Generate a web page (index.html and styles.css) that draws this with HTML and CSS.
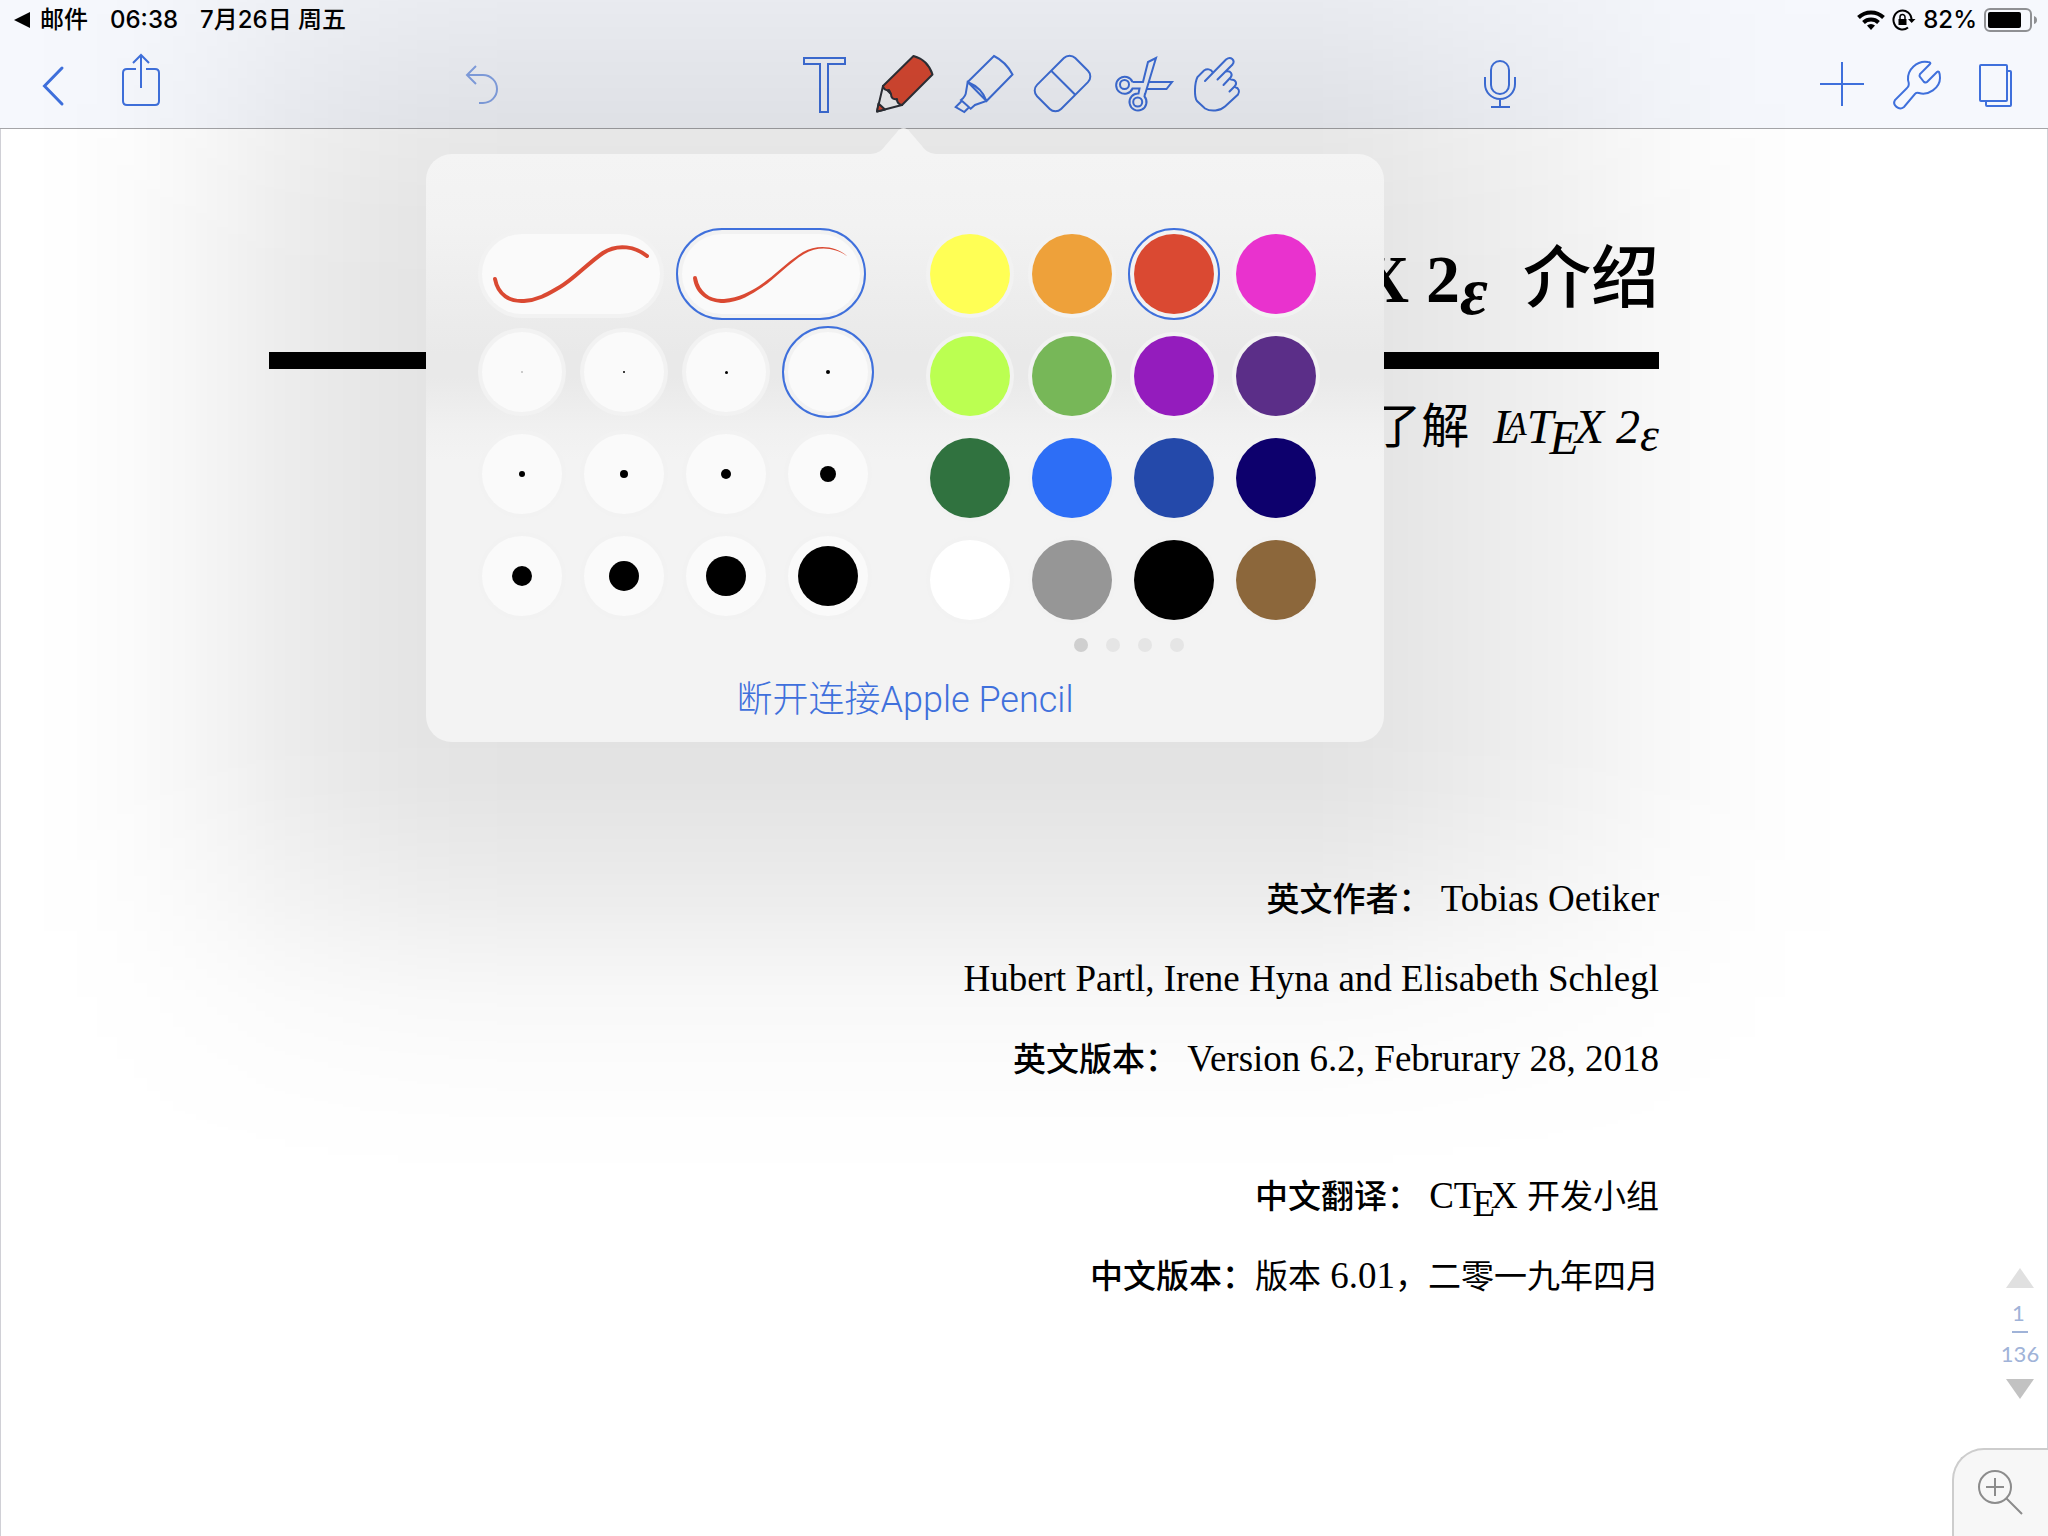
FILE: index.html
```html
<!DOCTYPE html>
<html lang="zh-CN">
<head>
<meta charset="utf-8">
<meta name="viewport" content="width=device-width, initial-scale=1">
<title>LaTeX 2ε 介绍</title>
<link rel="stylesheet" href="styles.css">
</head>
<body>
<header class="header">
  <div class="status">
    <a class="status-back" href="#mail">
      <svg width="16" height="16" viewBox="0 0 16 16" aria-hidden="true"><path d="M0 8 16 0v16z"/></svg>
      <span>邮件</span>
    </a>
    <span>06:38</span>
    <span>7月26日 周五</span>
    <span class="status-right">
      <svg width="28" height="22" viewBox="0 0 28 22" aria-hidden="true"><g fill="none" stroke="#000" stroke-width="4"><path d="M1.500 8.500a18 18 0 0 1 25 0"/><path d="M6.500 13.500a11 11 0 0 1 15 0"/></g><path d="M14 21l-4-4.500a6 6 0 0 1 8 0z"/></svg>
      <svg width="24" height="22" viewBox="0 0 24 22" aria-hidden="true"><g fill="none" stroke="#000" stroke-width="2"><path d="M16 18.500A9 9.500 0 1 1 19.500 11"/><path d="M8 10V8a2.500 2.500 0 0 1 5 0v2" stroke-width="1.500"/></g><path d="M6.500 10h8v6h-8zM16 10h7.500l-3.800 4z"/></svg>
      <span>82%</span>
      <svg width="54" height="24" viewBox="0 0 54 24" aria-hidden="true"><rect x="1" y="1" width="46" height="22" rx="5" fill="none" stroke="#8f9093" stroke-width="2"/><rect x="4" y="4" width="33" height="16" rx="2"/><path d="M50 8q3 1 3 4t-3 4z" fill="#8f9093"/></svg>
    </span>
  </div>
  <nav class="toolbar" aria-label="工具">
    <div class="tools tools-left">
      <button class="tool" type="button" aria-label="返回"><svg viewBox="0 0 80 88"><path d="M50 28 32.500 46 50 64" stroke-width="3" stroke-linecap="round"/></svg></button>
      <button class="tool" type="button" aria-label="共享"><svg viewBox="0 0 80 88"><path d="M36 29H27q-4 0-4 4v28q0 4 4 4h28q4 0 4-4V33q0-4-4-4h-9M41 48V15M33 23l8-8 8 8"/></svg></button>
      <button class="tool tool-undo" type="button" aria-label="撤销"><svg viewBox="0 0 80 88"><path d="M34 26 25 35l9 9M25 35h16a14 14 0 0 1 0 28h-4"/></svg></button>
    </div>
    <div class="tools">
      <button class="tool" type="button" aria-label="文本"><svg viewBox="0 0 80 88"><path d="M20 18h41v6H44v48h-8V24H20z"/></svg></button>
      <div class="pen">
        <button class="tool" type="button" aria-label="笔" aria-expanded="true"><svg viewBox="0 0 80 88"><g stroke="#2e3138" stroke-linejoin="round"><path d="M19 46 38 65 13 71.500z" fill="#f6f6f8"/><path d="M14.500 63.500 21 69.500l-8 2z" fill="#da4932"/><path d="M49.500 16Q64 20 68.500 34.500L38 65q-5-1-5-6-6 1-6-5l-2-4q-5 1-6-4z" fill="#da4932"/></g></svg></button>
        <section class="popover" aria-label="笔设置">
          <svg class="popover-arrow" width="65" height="27" viewBox="0 0 65 27" aria-hidden="true"><path d="M0 27V26C8 25 11 22 14 18L26 4C29-1 36-1 39 4L51 18C54 22 57 25 65 26V27z"/></svg>
          <div class="panels">
            <div class="brush">
              <div class="styles" role="radiogroup" aria-label="笔触">
                <label class="pill"><input type="radio" name="stroke" aria-label="等宽"><svg viewBox="0 0 178 80" aria-hidden="true"><path d="M13 45C16 61 28 68 42 67 58 66 69 58 78 53 92 45 106 29 121 19 136 9 154 13 165 22" fill="none" stroke="#da4932" stroke-width="4" stroke-linecap="round"/></svg></label>
                <label class="pill"><input type="radio" name="stroke" aria-label="压感" checked><svg viewBox="0 0 178 80" aria-hidden="true"><path d="M11 44a2 2 0 0 1 4 0C18 59 29 66 42 65 57 64 69 57 77 52 91 43 106 27 121 18 136 10 154 12 165.500 22.500 154 14 137 11 122 20 107 29 93 45 79 54 70 60 58 68 42 69 26 69 13 60 11 44z" fill="#da4932"/></svg></label>
              </div>
              <div class="grid" role="radiogroup" aria-label="粗细">
                <input class="size size-faint" type="radio" name="size" aria-label="1" style="--dot:2px">
                <input class="size" type="radio" name="size" aria-label="2" style="--dot:2px">
                <input class="size" type="radio" name="size" aria-label="3" style="--dot:3px">
                <input class="size" type="radio" name="size" aria-label="4" style="--dot:4px" checked>
                <input class="size" type="radio" name="size" aria-label="6" style="--dot:6px">
                <input class="size" type="radio" name="size" aria-label="8" style="--dot:8px">
                <input class="size" type="radio" name="size" aria-label="10" style="--dot:10px">
                <input class="size" type="radio" name="size" aria-label="16" style="--dot:16px">
                <input class="size" type="radio" name="size" aria-label="20" style="--dot:20px">
                <input class="size" type="radio" name="size" aria-label="30" style="--dot:30px">
                <input class="size" type="radio" name="size" aria-label="40" style="--dot:40px">
                <input class="size" type="radio" name="size" aria-label="60" style="--dot:60px">
              </div>
            </div>
            <div class="palette">
              <div class="grid" role="radiogroup" aria-label="颜色">
                <input class="swatch" type="radio" name="color" aria-label="黄" style="--c:#ffff55">
                <input class="swatch" type="radio" name="color" aria-label="橙" style="--c:#eea13a">
                <input class="swatch" type="radio" name="color" aria-label="红" style="--c:#da4932" checked>
                <input class="swatch" type="radio" name="color" aria-label="品红" style="--c:#e932ce">
                <input class="swatch" type="radio" name="color" aria-label="黄绿" style="--c:#bbff51">
                <input class="swatch" type="radio" name="color" aria-label="绿" style="--c:#77b758">
                <input class="swatch" type="radio" name="color" aria-label="紫" style="--c:#941cbd">
                <input class="swatch" type="radio" name="color" aria-label="深紫" style="--c:#5b2e88">
                <input class="swatch" type="radio" name="color" aria-label="深绿" style="--c:#30723f">
                <input class="swatch" type="radio" name="color" aria-label="亮蓝" style="--c:#2d6ef6">
                <input class="swatch" type="radio" name="color" aria-label="蓝" style="--c:#2449aa">
                <input class="swatch" type="radio" name="color" aria-label="藏青" style="--c:#0d006d">
                <input class="swatch" type="radio" name="color" aria-label="白" style="--c:#ffffff">
                <input class="swatch" type="radio" name="color" aria-label="灰" style="--c:#969696">
                <input class="swatch" type="radio" name="color" aria-label="黑" style="--c:#000000">
                <input class="swatch" type="radio" name="color" aria-label="棕" style="--c:#8c673b">
              </div>
              <div class="pager" aria-hidden="true"><i class="on"></i><i></i><i></i><i></i></div>
            </div>
          </div>
          <button class="disconnect" type="button">断开连接Apple Pencil</button>
        </section>
      </div>
      <button class="tool" type="button" aria-label="荧光笔"><svg viewBox="0 0 80 88"><path d="M50 16Q62 22 68.500 34.500L42.500 61 23.700 42zM23.700 42Q38 48 42.500 61L31 65l-4.300 3.700L17 60q5-4 5-8zM17.700 61l-6 6 8.600 5 5-5"/></svg></button>
      <button class="tool" type="button" aria-label="橡皮擦"><svg viewBox="0 0 80 88"><g transform="translate(38.500 43.500) rotate(-45)"><rect x="-27" y="-17" width="54" height="34" rx="8"/><path d="M1-17v34"/></g></svg></button>
      <button class="tool" type="button" aria-label="剪刀"><svg viewBox="0 0 80 88"><circle cx="20.500" cy="44.500" r="4.500"/><circle cx="33.700" cy="62" r="4.500"/><path d="M28.500 42H39L44 22l8-4-11 36.500M28.500 42a8.500 8.500 0 1 0 0 6.500H35.500L34.500 53.500a8.500 8.500 0 1 0 6 3l.5-3M45.500 42H68l-5.500 7H43.500"/></svg></button>
      <button class="tool" type="button" aria-label="手势"><svg viewBox="0 0 80 88"><path d="M21 41 42 19.500c5-4 9.500 1 6.500 5L33.500 39.500M42 31.500c5-1 7 3 4.500 6L39.500 45M47 39.500c5 0 6.500 4 3.500 7L45.500 51.500M51 47c4 1 5 4.500 3 7.500L41 66.500c-5 4.500-14 5.500-20 2L13 61c-3-4-2.500-18 .5-24L20 30.500c3-2 7-1.500 8.500 1.500" stroke-linecap="round"/></svg></button>
    </div>
    <div class="tools tools-right">
      <button class="tool tool-mic" type="button" aria-label="录音"><svg viewBox="0 0 80 88"><rect x="31" y="21" width="18" height="33" rx="9"/><path d="M25 37v7a15 15 0 0 0 30 0v-7M40 59v8M31 67h19"/></svg></button>
      <button class="tool narrow" type="button" aria-label="添加"><svg viewBox="0 0 76 88"><path d="M16 44h44M38 22v44"/></svg></button>
      <button class="tool narrow" type="button" aria-label="设置"><svg viewBox="0 0 76 88"><path d="M50 24c1-1 0-2-2-2-11-2-21 8-20 18q2 6-1 8L15 60c-3 5 4 11 9 7L35 54q1-2 4-1c9 3 21-5 21-15q0-4-1-6-1-1-2 0L47 42q-1 1-3 0l-4-5q-1-1 0-3z"/></svg></button>
      <button class="tool narrow" type="button" aria-label="页面"><svg viewBox="0 0 76 88"><rect x="24" y="25" width="27" height="36" rx="1"/><path d="M51 31h3q1 0 1 1v33q0 1-1 1H31q-1 0-1-1v-4"/></svg></button>
    </div>
  </nav>
</header>

<main class="document">
  <article class="sheet">
    <h1 class="title"><span class="roman">X 2<span class="eps">ε</span></span> 介绍</h1>
    <p class="subtitle">了解 <span class="latex">L<span class="up">A</span>T<span class="down">E</span>X 2<span class="low">ε</span></span></p>
    <div class="credits">
      <p><b>英文作者：</b> Tobias Oetiker</p>
      <p>Hubert Partl, Irene Hyna and Elisabeth Schlegl</p>
      <p><b>英文版本：</b> Version 6.2, Februrary 28, 2018</p>
    </div>
    <div class="credits">
      <p><b>中文翻译：</b> CT<span class="drop">E</span>X <span class="cn">开发小组</span></p>
      <p><b>中文版本：</b><span class="cn">版本</span> 6.01<span class="cn">，二零一九年四月</span></p>
    </div>
  </article>
  <nav class="pages" aria-label="页码">
    <button class="page-step" type="button" aria-label="上一页"><svg width="28" height="20" viewBox="0 0 28 20"><path d="M14 0 28 20H0z" fill="#e0e0e0"/></svg></button>
    <span class="page-now">1</span>
    <span class="page-all">136</span>
    <button class="page-step" type="button" aria-label="下一页"><svg width="28" height="20" viewBox="0 0 28 20"><path d="M0 0h28L14 20z" fill="#c2c2c2"/></svg></button>
  </nav>
  <button class="magnify" type="button" aria-label="放大"><svg width="46" height="46" viewBox="0 0 46 46"><g fill="none" stroke="#8c8c8c" stroke-width="2"><circle cx="18" cy="18" r="16"/><path d="M9 18h18M18 9v18M29.500 29.500 45 45"/></g></svg></button>
</main>
</body>
</html>
```
FILE: styles.css
```css
* { box-sizing: border-box; }

:root {
  --blue: #3f70dc;
}

body {
  margin: 0;
  min-height: 100vh;
  display: flex;
  flex-direction: column;
  background: #fff;
  color: #000;
  font-family: Inter, "Noto Sans CJK SC", sans-serif;
  overflow-x: hidden;
}

button {
  margin: 0;
  padding: 0;
  border: 0;
  background: none;
  font: inherit;
  color: inherit;
}

p, h1 { margin: 0; font-weight: 400; }

/* Header */
.header {
  position: relative;
  z-index: 1;
  background: #f6f8fd;
  border-bottom: 1px solid #a5a5a8;
}

.status {
  height: 40px;
  padding: 0 10px 0 14px;
  display: flex;
  align-items: center;
  gap: 22px;
  font-size: 24px;
  font-weight: 500;
  line-height: 40px;
}

.status-back {
  display: flex;
  align-items: center;
  gap: 10px;
  color: inherit;
  text-decoration: none;
}

.status-right {
  margin-left: auto;
  display: flex;
  align-items: center;
  gap: 7px;
}

.toolbar {
  display: grid;
  grid-template-columns: 1fr auto 1fr;
}

.tools { display: flex; }
.tools-left { padding-left: 12px; gap: 8px; }
.tools-right { padding-right: 16px; }
.tool-undo { margin-left: auto; margin-right: 262px; opacity: .6; }
.tool-mic { margin-left: 196px; margin-right: auto; }

.tool {
  display: block;
  width: 80px;
  height: 88px;
}

.narrow { width: 76px; }

.tool svg {
  display: block;
  width: 100%;
  height: 100%;
  fill: none;
  stroke: var(--blue);
  stroke-width: 2;
}

/* Pen popover */
.pen { position: relative; }

/* Wide soft shade behind the popover: one falloff across, one down */
.pen::before {
  content: "";
  position: absolute;
  top: -160px;
  left: -844px;
  width: 1840px;
  height: 1320px;
  pointer-events: none;
  background: linear-gradient(to right,
    rgba(0, 0, 0, 0) 0,
    rgba(0, 0, 0, .004) 47px,
    rgba(0, 0, 0, .014) 107px,
    rgba(0, 0, 0, .031) 160px,
    rgba(0, 0, 0, .051) 213px,
    rgba(0, 0, 0, .070) 258px,
    rgba(0, 0, 0, .092) 330px,
    rgba(0, 0, 0, .105) 406px,
    rgba(0, 0, 0, .112) 500px,
    rgba(0, 0, 0, .112) 1290px,
    rgba(0, 0, 0, .100) 1365px,
    rgba(0, 0, 0, .084) 1440px,
    rgba(0, 0, 0, .064) 1520px,
    rgba(0, 0, 0, .046) 1580px,
    rgba(0, 0, 0, .026) 1640px,
    rgba(0, 0, 0, .011) 1720px,
    rgba(0, 0, 0, .004) 1780px,
    rgba(0, 0, 0, 0) 1840px);
  mask-image: linear-gradient(
    rgba(0, 0, 0, .1) 0,
    rgba(0, 0, 0, .46) 120px,
    rgba(0, 0, 0, .66) 190px,
    rgba(0, 0, 0, .82) 250px,
    rgba(0, 0, 0, .95) 330px,
    #000 420px,
    #000 850px,
    rgba(0, 0, 0, .94) 910px,
    rgba(0, 0, 0, .78) 970px,
    rgba(0, 0, 0, .61) 1025px,
    rgba(0, 0, 0, .42) 1070px,
    rgba(0, 0, 0, .24) 1120px,
    rgba(0, 0, 0, .12) 1180px,
    rgba(0, 0, 0, .03) 1255px,
    transparent 1320px);
}

.popover {
  position: absolute;
  top: 114px;
  left: 50%;
  width: 958px;
  margin-left: -478px;
  padding: 80px 68px 18px 56px;
  border-radius: 26px;
  background: linear-gradient(#f4f4f4 0, #f2f2f2 12%, #eeeeee 22%, #e9e9e9 34%, #e9e9e9 38%, #f0f0f0 46%, #f3f3f3 52%);
}

.popover-arrow {
  position: absolute;
  left: 445px;
  top: -26px;
  fill: #f4f4f4;
}

.panels {
  display: flex;
  justify-content: space-between;
}

.brush {
  display: flex;
  flex-direction: column;
  gap: 18px;
}

.styles { display: flex; gap: 22px; }

.pill {
  position: relative;
  width: 178px;
  height: 80px;
  border-radius: 40px;
  background: #fafafa;
  box-shadow: 0 0 0 4px #f2f2f2;
}

.pill svg { display: block; width: 178px; height: 80px; }
.pill input { position: absolute; opacity: 0; }

.grid {
  display: grid;
  grid-template-columns: repeat(4, 80px);
  gap: 22px;
}

.size, .swatch {
  appearance: none;
  width: 80px;
  height: 80px;
  margin: 0;
  border-radius: 50%;
  box-shadow: 0 0 0 4px #f2f2f2;
}

.size {
  display: grid;
  place-items: center;
  background: #fafafa;
}

.size::before {
  content: "";
  width: var(--dot);
  height: var(--dot);
  border-radius: 50%;
  background: #000;
}

.size-faint::before { background: #bbb; }

.swatch { background: var(--c); }

.size:checked, .swatch:checked, .pill:has(:checked) {
  outline: 2px solid var(--blue);
  outline-offset: 4px;
}

.pager {
  display: flex;
  justify-content: center;
  gap: 18px;
  padding: 18px 0 0 12px;
}

.pager i {
  width: 14px;
  height: 14px;
  border-radius: 50%;
  background: #e5e5e5;
}

.pager .on { background: #cfcfcf; }

.disconnect {
  display: block;
  margin: 24px -12px 0 0;
  width: calc(100% + 12px);
  font-family: Roboto, "Noto Sans CJK SC", sans-serif;
  font-size: 36px;
  font-weight: 300;
  line-height: 48px;
  color: var(--blue);
}

/* Document */
.document {
  position: relative;
  flex: 1;
  border: solid #d0d0d6;
  border-width: 0 1px;
}

.sheet {
  padding: 102px 388px 160px 268px;
  text-align: right;
  font-family: "Liberation Serif", "Noto Sans CJK SC", serif;
}

.title {
  padding-bottom: 25px;
  border-bottom: 17px solid #000;
  font-size: 68px;
  font-weight: 500;
  line-height: 96px;
}

.roman { font-weight: 700; margin-right: 18px; }
.eps, .up, .down, .low, .drop { line-height: 0; }
.eps { font-style: italic; vertical-align: -12px; }

.subtitle {
  margin-top: 26px;
  font-size: 48px;
  line-height: 64px;
}

.latex { font-style: italic; margin-left: 12px; }
.up { font-size: 34px; margin-left: -14px; vertical-align: 8px; }
.down { margin: 0 -4px; vertical-align: -11px; }
.low { vertical-align: -8px; }

.credits {
  font-size: 37px;
  line-height: 80px;
}

.credits b, .cn { font-size: 33px; line-height: 40px; }
.credits b { font-weight: 500; }
.subtitle + .credits { margin-top: 400px; }
.credits + .credits { margin-top: 57px; }
.drop { margin: 0 -4px; vertical-align: -8px; }

/* Page position */
.pages {
  position: absolute;
  right: 9px;
  bottom: 137px;
  width: 36px;
  display: flex;
  flex-direction: column;
  align-items: center;
  font-family: Lato, sans-serif;
  font-size: 22px;
  line-height: 26px;
  color: #a0b3d8;
}

.page-step { display: block; }
.page-step svg { display: block; }
.page-now { margin-top: 12px; }

.page-now::after {
  content: "";
  display: block;
  width: 16px;
  height: 2px;
  margin: 5px 0 8px;
  background: #a0b3d8;
}

.page-all { margin-bottom: 12px; }

.magnify {
  position: absolute;
  right: -1px;
  bottom: 0;
  width: 96px;
  height: 88px;
  padding: 0 2px 3px 0;
  border: solid #cdcdcd;
  border-width: 2px 0 0 2px;
  border-radius: 32px 0 0 0;
  background: #f7f7f7;
  display: grid;
  place-items: center;
}
```
